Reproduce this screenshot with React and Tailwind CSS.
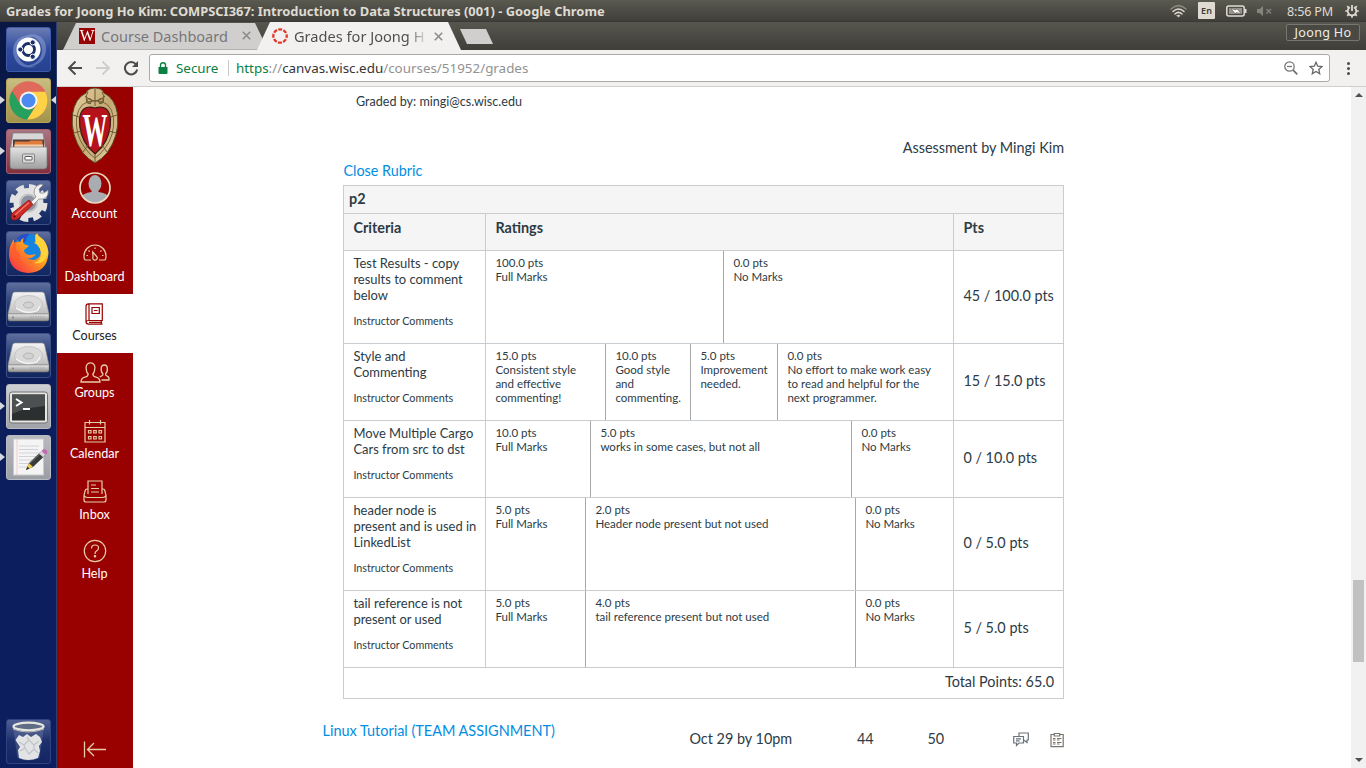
const UBUNTU = "font-['Noto_Sans','Open_Sans',sans-serif]";

/* ---------- launcher artwork ---------- */

function Tile({ className, children, left, right }) {
  return (
    <div className={`relative h-[45px] w-[45px] shrink-0 rounded-[3px] ${className}`}>
      <svg viewBox="0 0 45 45" className="block h-[45px] w-[45px]">{children}</svg>
      {left && <span className="absolute top-[17px] -left-[7px] border-y-[4px] border-l-[5px] border-y-transparent border-l-[#d5d8de]" />}
      {right && <span className="absolute top-[17px] -right-[6px] border-y-[4px] border-r-[5px] border-y-transparent border-r-[#d5d8de]" />}
    </div>
  );
}

const glass = "bg-linear-to-b from-[#5f6f9d] via-[#253a74] to-[#12265f] border border-[#3c4f86]";

function Drive() {
  return (
    <Tile className={glass}>
      <defs>
        <linearGradient id="drv" x1="0" y1="0" x2="0" y2="1">
          <stop offset="0" stopColor="#f4f4f4" />
          <stop offset="1" stopColor="#bdbdbd" />
        </linearGradient>
        <linearGradient id="drvf" x1="0" y1="0" x2="0" y2="1">
          <stop offset="0" stopColor="#e9e9e9" />
          <stop offset="1" stopColor="#8d8d8d" />
        </linearGradient>
      </defs>
      <path d="M8 9H35Q37 9 37.600 11L42 31H1L5.500 11Q6 9 8 9Z" fill="url(#drv)" stroke="#8f8f8f" strokeWidth=".6" />
      <ellipse cx="21.500" cy="21.500" rx="14" ry="9" fill="#dadada" stroke="#bcbcbc" strokeWidth=".8" />
      <path d="M9 25Q19 32 30 28L33 23" fill="none" stroke="#f7f7f7" strokeWidth="1.200" />
      <ellipse cx="21.500" cy="22" rx="5" ry="3" fill="#d2d2d2" stroke="#aaa" strokeWidth=".8" />
      <path d="M1 31H42V36Q42 38 40 38H3Q1 38 1 36Z" fill="url(#drvf)" stroke="#777" strokeWidth=".5" />
      <path d="M24 33v3M26.500 33v3M29 33v3M31.500 33v3M34 33v3M36.500 33v3" stroke="#aaa" strokeWidth=".9" />
      <circle cx="6" cy="34.500" r=".9" fill="#777" />
    </Tile>
  );
}

function Launcher() {
  return (
    <div className="flex h-full w-[57px] shrink-0 flex-col gap-[6px] border-r border-[#2c3d72] bg-linear-to-b from-[#081744] to-[#0d1e5e] to-60% pt-[5px] pb-1 pl-[6px]">
      <Tile className="border border-[#3f58a8] bg-linear-to-b from-[#6b7cb4] via-[#2f4a9c] to-[#24418f]">
        <path d="M6 22C7 9 20 4 33 9C22 7 12 13 11 23C10 34 20 40 30 38C16 43 6 35 6 22ZM39 22C38 35 26 41 15 37C27 39 35 32 35 22C35 13 28 8 20 7C31 4 40 11 39 22Z" fill="#93a8dc" opacity=".5" />
        <circle cx="21.500" cy="21.500" r="12" fill="#fff" />
        <circle cx="21.500" cy="21.500" r="6" fill="none" stroke="#1b2f6b" strokeWidth="2.800" />
        <g fill="#1b2f6b" stroke="#fff" strokeWidth="1">
          <circle cx="13.300" cy="21.500" r="2.600" />
          <circle cx="25.700" cy="14.400" r="2.600" />
          <circle cx="25.700" cy="28.700" r="2.600" />
        </g>
      </Tile>
      <Tile className="border border-[#b5a55c] bg-linear-to-b from-[#c9bd80] to-[#a3934a]" left right>
        <circle cx="21.500" cy="21.500" r="19" fill="#e0635a" />
        <path d="M21.500 12.500H38.2A19 19 0 0 1 21.500 40.500L20 40.400L29.500 26Z" fill="#fdd247" />
        <path d="M5 12L13.700 26L21.500 31L27.500 28.500L20 40.500A19 19 0 0 1 5 12Z" fill="#25a05d" />
        <path d="M5 12A19 19 0 0 1 38.200 12.500H21.500Q14 13 13 22Z" fill="#df6a5c" />
        <circle cx="21.500" cy="21.500" r="9" fill="#f7f7f2" />
        <circle cx="21.500" cy="21.500" r="7" fill="#4b8bf0" />
      </Tile>
      <Tile className="border border-[#a4606e] bg-linear-to-b from-[#a97682] to-[#822f3e]" left>
        <defs>
          <linearGradient id="cab" x1="0" y1="0" x2="0" y2="1">
            <stop offset="0" stopColor="#e4e4e4" />
            <stop offset="1" stopColor="#9f9f9f" />
          </linearGradient>
        </defs>
        <path d="M6 3H36L38.500 18H3.500Z" fill="#d7d7d7" stroke="#777" strokeWidth=".6" />
        <path d="M6 9.500H37V18H6Z" fill="#513b33" />
        <path d="M8 11.500H22L23.500 10.500H35.500V18H7Z" fill="#e07d3d" />
        <path d="M7.500 14.500H36V18H7.500Z" fill="#f4cfae" />
        <path d="M3 17H39Q40 17 40 18V36Q40 39 37 39H6Q3 39 3 36Z" fill="url(#cab)" stroke="#777" strokeWidth=".7" />
        <rect x="15.500" y="24" width="12" height="9" rx="1" fill="#d8d8d8" stroke="#858585" />
        <rect x="18" y="26.500" width="7" height="3.500" rx=".5" fill="#fff" stroke="#555" />
      </Tile>
      <Tile className={glass}>
        <circle cx="21.500" cy="22" r="15" fill="#e2e2e2" />
        <circle cx="21.500" cy="22" r="16.500" fill="none" stroke="#e2e2e2" strokeWidth="5" strokeDasharray="7.960 5" />
        <circle cx="21.500" cy="22" r="8.500" fill="#8d93a3" stroke="#c4c4c4" strokeWidth="2" />
        <path d="M19 26L29 16L27 12Q27 5 34 3L36 4L32 8L33 12L37 12L41 9Q42 16 36 18L32 18L22 28Z" fill="#f2f2f2" stroke="#8c8c8c" strokeWidth=".8" />
        <path d="M22 19L26 23.500L11 38Q7 40 4.500 38Q3 35 5.500 32Z" fill="#cc2a24" stroke="#8b100f" strokeWidth=".8" />
        <path d="M22 21.500L8 34" stroke="#ef7a70" strokeWidth="1.500" />
        <circle cx="7.500" cy="35.500" r="1.200" fill="#601010" />
      </Tile>
      <Tile className={glass}>
        <defs>
          <linearGradient id="fox" x1="1" y1="0" x2="0" y2="1">
            <stop offset="0" stopColor="#ffe94a" />
            <stop offset=".45" stopColor="#ff9a1e" />
            <stop offset="1" stopColor="#f5204f" />
          </linearGradient>
        </defs>
        <circle cx="22" cy="17" r="15" fill="#1583e0" />
        <path d="M10 6Q15 1 23 2Q19 4 19 9L14 12Z" fill="#2a4fc6" />
        <path d="M7 7L7 11Q10 9 13 10Q14 7 17 6Q15 9 17 12L22 14L17 18Q17 22 22 23Q26 23 29 22Q26 27 20 26Q28 31 33 24Q35 18 31 13L27 11Q30 10 28 3Q32 1 31 4Q40 9 41.500 20Q41 40 21.500 41Q3 40 2 23Q2 13 7 7Z" fill="url(#fox)" />
        <path d="M30 1Q26 8 31 14Q35 18 34 24Q32 30 27 31Q38 33 41 21Q40 9 33 5Q30 3 30 1Z" fill="#ffd43a" />
        <path d="M7 11Q3 18 5 24Q9 34 20 34Q12 30 12 23Q12 19 9 18Q8 14 10 10Z" fill="#ff5a2c" opacity=".75" />
      </Tile>
      <Drive />
      <Drive />
      <Tile className="border border-[#b9bbc2] bg-linear-to-b from-[#cfd0d4] to-[#a0a2a9]" left>
        <rect x="2.500" y="7" width="38" height="31" rx="2.500" fill="#e6e6e2" stroke="#6f6f6f" />
        <rect x="5" y="9.500" width="33" height="26" fill="#2c2f2f" />
        <path d="M5 9.500H38V21Q20 22 5 29Z" fill="#4d5050" />
        <path d="M9 14L14.500 17.500L9 21" fill="none" stroke="#fff" strokeWidth="2" />
        <path d="M16 24H23" stroke="#fff" strokeWidth="2" />
      </Tile>
      <Tile className="border border-[#b9bbc2] bg-linear-to-b from-[#b9bac0] to-[#9c9ea6]" left>
        <rect x="6.500" y="3" width="30" height="36" fill="#f4f4f4" stroke="#c9c9c9" />
        <path d="M12 10H32M12 13.500H31M12 17H32M12 20.500H29M12 24H26M12 27.500H22M12 31H20" stroke="#cfd3d8" strokeWidth="1.200" />
        <path d="M10 3V39" stroke="#ecb7b7" strokeWidth=".6" />
        <path d="M19 34L22 27L34 15.500L38 19.500L26 31Z" fill="#3a3a3a" />
        <path d="M23 27L34 17" stroke="#777" strokeWidth="1" />
        <path d="M19 34L22 27L26 31Z" fill="#e9c94e" />
        <path d="M19 34L20.500 30.800L22.300 32.500Z" fill="#222" />
        <path d="M32 17.500L35 14.500L39 18L36 21.300Z" fill="#d8d8d8" />
        <path d="M34.500 15L36.500 13Q39 12.500 40.500 15.500L40 17.500L38.500 19Z" fill="#c16bb0" />
      </Tile>
      <div className="flex-1" />
      <Tile className="border border-[#31437e] bg-linear-to-b from-[#515f93] via-[#1d2f6c] to-[#132664]">
        <path d="M6 7L10.500 38Q21.500 43 32.500 38L37 7Z" fill="#7b88ad" opacity=".35" />
        <path d="M8.500 20L12 15L16 17L20 14L24 17L29 14L33 17L35 22L32 26L33 31L31 38Q21 42 12 38L11 30L13 27Z" fill="#e1e3e4" />
        <path d="M12 22L17 25L22 20L27 25L32 21M13 31L18 28L22 34L27 29L31 33M17 25L18 28M27 25V29M20 17L22 20" stroke="#bfc3c7" strokeWidth="1.200" fill="none" />
        <ellipse cx="21.500" cy="6.500" rx="15" ry="3.800" fill="#606c86" stroke="#e6e6e0" strokeWidth="2.200" />
        <path d="M6 9Q21 15 37 9" fill="none" stroke="#b5b8b8" strokeWidth="1" />
      </Tile>
    </div>
  );
}

/* ---------- desktop panel and browser chrome ---------- */

function TopPanel() {
  return (
    <div className={`flex h-[22px] shrink-0 items-center border-b border-[#3a3934] bg-linear-to-b from-[#5b5a50] to-[#403f3a] pl-[6px] ${UBUNTU}`}>
      <div className="w-[1164px] text-[12.900px] leading-[20px] font-bold whitespace-pre text-[#dfdbd2]">
        Grades for Joong Ho Kim: COMPSCI367: Introduction to Data Structures (001) - Google Chrome
      </div>
      <svg className="mr-[11px] h-[16px] w-[17px]" viewBox="0 0 17 16" fill="none" stroke="#dfdbd2" strokeLinecap="round">
        <path d="M1 6Q8.500-.8 16 6" stroke="#8b897f" strokeWidth="1.500" />
        <path d="M3 8.500Q8.500 3.500 14 8.500M5 11Q8.500 7.800 12 11" strokeWidth="1.500" />
        <path d="M7 12.500L8.500 14.200L10 12.500Q8.500 11.500 7 12.500Z" fill="#dfdbd2" strokeWidth=".5" />
      </svg>
      <span className="mr-[11px] flex h-[17px] w-[17px] items-center justify-center rounded-[1px] bg-[#dfdbd2] text-[9px] font-semibold text-[#3c3b37]">En</span>
      <svg className="mr-[10px] h-[12px] w-[21px]" viewBox="0 0 21 12">
        <rect x=".8" y="1" width="17.400" height="10" rx="2" fill="none" stroke="#dfdbd2" strokeWidth="1.500" />
        <rect x="3" y="3" width="13" height="6" fill="#97948b" />
        <path d="M19 4h1.500v4h-1.500z" fill="#dfdbd2" />
        <path d="M5 3.500L10 5L10.500 3.500L15 8.500L10 7.500L9.500 9Z" fill="#fff" stroke="#4a4943" strokeWidth=".5" />
      </svg>
      <svg className="mr-[15px] h-[12px] w-[15px]" viewBox="0 0 15 12">
        <path d="M0 4H2.500L6 1V11L2.500 8H0Z" fill="#85837a" />
        <path d="M9.500 4L14 8.500M14 4L9.500 8.500" stroke="#85837a" strokeWidth="1.400" />
      </svg>
      <span className="w-[58px] pt-[2px] text-[12.600px] leading-[18px] tracking-[-0.200px] whitespace-pre text-[#dfdbd2]">8:56 PM</span>
      <svg className="h-[14px] w-[14px]" viewBox="0 0 14 14" fill="none" stroke="#dfdbd2">
        <path d="M5 3.300A4.300 4.300 0 1 0 9 3.300" strokeWidth="1.800" />
        <path d="M7 1V7" strokeWidth="1.800" />
        <path d="M.3 7H2.500M11.500 7H13.700M7 11.500V13.800M2.200 2.200L3.800 3.800M11.800 2.200L10.200 3.800M2.200 11.800L3.800 10.200M11.800 11.800L10.200 10.200" strokeWidth="1.700" />
      </svg>
    </div>
  );
}

function CloseX() {
  return (
    <svg className="h-[9px] w-[9px]" viewBox="0 0 9 9" stroke="#8c8b89" strokeWidth="1.600">
      <path d="M.8 .8L8.200 8.200M8.200 .8L.8 8.200" />
    </svg>
  );
}

function TabStrip() {
  return (
    <div className={`flex h-[28px] shrink-0 bg-linear-to-b from-[#57564e] to-[#3f3e39] pl-[6px] ${UBUNTU}`}>
      <div className="flex h-[28px] w-[205px] items-center border-b border-[#b3b1ae] bg-[#d0cfcd] pl-[16px] [clip-path:polygon(0_100%,13px_1px,192px_1px,100%_100%)]">
        <span className="flex h-[16px] w-[16px] items-center justify-center bg-[#980303] font-['Liberation_Serif',serif] text-[17px] leading-[16px] text-white">
          <span className="scale-x-[0.92]">W</span>
        </span>
        <span className="ml-[6px] w-[141px] text-[14.500px] leading-[20px] whitespace-nowrap text-[#77767a]">Course Dashboard</span>
        <CloseX />
      </div>
      <div className="relative -ml-[11px] flex h-[28px] w-[204px] items-center bg-[#f2f1f0] pl-[15px] [clip-path:polygon(0_100%,13px_0,191px_0,100%_100%)]">
        <svg className="h-[16px] w-[16px]" viewBox="0 0 16 16" fill="none" stroke="#e0392b">
          <circle cx="8" cy="8" r="6.700" strokeWidth="2.300" strokeDasharray="3.900 1.360" strokeDashoffset="1.950" />
        </svg>
        <span className="ml-[6px] w-[134px] bg-linear-to-r from-[#4d4c4a] from-85% to-[#4d4c4a00] bg-clip-text text-[14.600px] leading-[20px] whitespace-nowrap text-transparent">Grades for Joong H</span>
        <span className="ml-[6px] flex"><CloseX /></span>
      </div>
      <div className="mt-[7px] -ml-px h-[15px] w-[33px] bg-[#d0cfcd] [clip-path:polygon(0_0,26px_0,100%_100%,7px_100%)]" />
      <div className="flex-1" />
      <div className="mt-[2px] mr-[6px] flex h-[17px] w-[74px] items-center justify-center rounded-[2px] border border-[#77766f] bg-[#494842] pt-[2px] text-[12.600px] leading-none text-[#eeece6]">
        <span className="tracking-[0.300px]">Joong Ho</span>
      </div>
    </div>
  );
}

function Toolbar() {
  return (
    <div className={`flex h-[37px] shrink-0 items-center border-b border-[#d0cfce] bg-[#f2f1f0] pl-[10px] ${UBUNTU}`}>
      <svg className="h-[16px] w-[16px]" viewBox="0 0 16 16" fill="none" stroke="#4b4b4b" strokeWidth="2">
        <path d="M15 8H2M8.500 1.500L2 8L8.500 14.500" />
      </svg>
      <svg className="ml-[12px] h-[16px] w-[16px]" viewBox="0 0 16 16" fill="none" stroke="#cfcecd" strokeWidth="2">
        <path d="M1 8H14M7.500 1.500L14 8L7.500 14.500" />
      </svg>
      <svg className="ml-[12px] h-[16px] w-[16px]" viewBox="0 0 16 16" fill="none" stroke="#4b4b4b" strokeWidth="2">
        <path d="M13 4.300A6.200 6.200 0 1 0 14.200 9.500" />
        <path d="M15 1V7H9Z" fill="#4b4b4b" stroke="none" />
      </svg>
      <div className="ml-[10px] flex h-[28px] w-[1181px] items-center rounded-[3px] border border-[#aaa9a8] bg-white pr-[6px] pl-[8px] text-[13.400px]">
        <svg className="h-[12px] w-[10px]" viewBox="0 0 10 12">
          <path d="M1 5H9Q9.500 5 9.500 5.500V11Q9.500 12 8.500 12H1.500Q.5 12 .5 11V5.500Q.5 5 1 5Z" fill="#0b8043" />
          <path d="M2.500 6V3A2.500 2.300 0 0 1 7.500 3V6" fill="none" stroke="#0b8043" strokeWidth="1.400" />
        </svg>
        <span className="ml-[8px] w-[52px] text-[#0b8043]">Secure</span>
        <span className="mr-[7px] h-[16px] w-px bg-[#c8c8c8]" />
        <span className="flex-1 whitespace-nowrap text-[#929292]">
          <span className="text-[#0b8043]">https</span>://<span className="text-[#333]">canvas.wisc.edu</span>/courses/51952/grades
        </span>
        <svg className="h-[14px] w-[14px]" viewBox="0 0 14 14" fill="none" stroke="#777" strokeWidth="1.300">
          <circle cx="5.500" cy="5.500" r="4.700" />
          <path d="M3 5.500H8" />
          <path d="M9 9L13.300 13.300" strokeWidth="1.800" />
        </svg>
        <svg className="ml-[11px] h-[14px] w-[14px]" viewBox="0 0 14 14" fill="none" stroke="#666" strokeWidth="1.300">
          <path d="M7 1.300L8.700 5.200L13 5.600L9.800 8.400L10.700 12.700L7 10.400L3.300 12.700L4.200 8.400L1 5.600L5.300 5.200Z" />
        </svg>
      </div>
      <div className="ml-[17px] flex flex-col gap-[2px]">
        <span className="h-[3px] w-[3px] rounded-full bg-[#4b4b4b]" />
        <span className="h-[3px] w-[3px] rounded-full bg-[#4b4b4b]" />
        <span className="h-[3px] w-[3px] rounded-full bg-[#4b4b4b]" />
      </div>
    </div>
  );
}

/* ---------- course navigation ---------- */

function Crest() {
  return (
    <svg className="mx-auto block h-[78px] w-[48px] shrink-0" viewBox="0 0 48 78">
      <defs>
        <linearGradient id="gold" x1="0" y1="0" x2="1" y2="1">
          <stop offset="0" stopColor="#e6d3a4" />
          <stop offset=".5" stopColor="#c3a871" />
          <stop offset="1" stopColor="#e3cfa2" />
        </linearGradient>
      </defs>
      <path d="M24 1Q31 1 33 6Q44 11 46.500 27Q49 48 36 66Q31 72 24 76Q17 72 12 66Q-1 48 1.500 27Q4 11 15 6Q17 1 24 1Z" fill="url(#gold)" stroke="#5a4526" strokeWidth="1" />
      <path d="M24 14Q40 13 42.500 31Q44 48 34 61Q29 68 24 71Q19 68 14 61Q4 48 5.500 31Q8 13 24 14Z" fill="none" stroke="#7c6740" strokeWidth="1" />
      <path d="M24 21Q38 17 39.500 32Q40 48 31 60L24 67L17 60Q8 48 8.500 32Q10 17 24 21Z" fill="#b5121b" stroke="#3a1a12" strokeWidth="1.200" />
      <path d="M24 2V19M17 5Q12 13 20 17M31 5Q36 13 28 17M14 9Q24 19 34 9M2 28L8 30M46 28L40 30M3 46L10 44M45 46L38 44M12 65L17 58M36 65L31 58M24 67V76" fill="none" stroke="#6d5730" strokeWidth="1" />
      <circle cx="18" cy="14" r="2.500" fill="none" stroke="#6d5730" />
      <circle cx="30" cy="14" r="2.500" fill="none" stroke="#6d5730" />
      <text x="11.500" y="59" fontFamily="Liberation Serif" fontWeight="700" fontSize="46" fill="#fff" textLength="25" lengthAdjust="spacingAndGlyphs">W</text>
    </svg>
  );
}

const navIcons = {
  Account: (
    <svg className="h-[32px] w-[32px]" viewBox="0 0 32 32">
      <defs><clipPath id="av"><circle cx="16" cy="16" r="15" /></clipPath></defs>
      <circle cx="16" cy="16" r="15" fill="#990000" />
      <g clipPath="url(#av)" fill="#a9acb0">
        <ellipse cx="16" cy="11.500" rx="6.500" ry="8.500" />
        <path d="M12.500 17H19.500V20Q28 21 31 26V32H1V26Q4 21 12.500 20Z" />
      </g>
      <circle cx="16" cy="16" r="15" fill="none" stroke="#eddcc0" strokeWidth="1.700" />
    </svg>
  ),
  Dashboard: (
    <svg className="mb-[6px] h-[17px] w-[24px]" viewBox="0 0 24 17" fill="none" stroke="currentColor" strokeWidth="1.200">
      <path d="M8 16H2.500Q1 16 1 12A11 11 0 0 1 23 12Q23 16 21.500 16H16" />
      <path d="M9.700 8L13.700 12.500A2.200 2.200 0 1 1 10 13Z" />
      <path d="M3.500 11.500H5M19 11.500H20.500M5.500 6.500L6.700 7.600M18.500 6.500L17.300 7.600M12 3.500V5" />
    </svg>
  ),
  Courses: (
    <svg className="mb-px h-[22px] w-[19px]" viewBox="0 0 19 22" fill="none" stroke="currentColor" strokeWidth="1.200">
      <path d="M3.500 17.500H17.300V.8H3.500Q1 .8 1 3.500V18.500Q1 21.200 3.500 21.200H17.500M16.300 17.500V21.200M1 19Q1 17.500 3.500 17.500M4 .8V17.500M4 19.400H16.300" />
      <path d="M7 4.500H14.300V10.500H7ZM9 7.500H12.500" />
    </svg>
  ),
  Groups: (
    <svg className="h-[21px] w-[30px]" viewBox="0 0 30 21" fill="none" stroke="currentColor" strokeWidth="1.300">
      <path d="M7 10.500Q5 4 7.500 2Q10.500-.3 13.500 2Q16 4 14 10.500L12.800 12Q13 14.500 16 15.200Q20 16.200 20 20H1Q1 16.200 5 15.200Q8 14.500 8.200 12Z" />
      <path d="M21.500 18H29Q29.300 14.800 27.200 14.200Q25.200 13.500 25.500 12Q27.800 10 27.300 6Q27 3 24.300 3Q21.500 3 21.200 6Q20.800 10 23 12Q23.300 13.500 21.300 14.200Q20.300 14.500 19.800 15" />
    </svg>
  ),
  Calendar: (
    <svg className="mb-px h-[24px] w-[22px]" viewBox="0 0 22 24" fill="none" stroke="currentColor" strokeWidth="1.200">
      <path d="M1 3.500H21V23H1ZM1 8.500H21M5.500 1V5.500M16.500 1V5.500" />
      <path d="M4.500 11.500H7V14H4.500ZM9.700 11.500H12.200V14H9.700ZM15 11.500H17.500V14H15ZM4.500 17.500H7V20H4.500ZM9.700 17.500H12.200V20H9.700ZM15 17.500H17.500V20H15Z" />
    </svg>
  ),
  Inbox: (
    <svg className="mb-[2px] h-[23px] w-[24px]" viewBox="0 0 24 23" fill="none" stroke="currentColor" strokeWidth="1.200">
      <path d="M5 14V1H19V14M8 5H13M8 8.500H16M8 12H16" />
      <path d="M5 9H4Q2.500 9 2 11L1 15.500V20Q1 22 3 22H21Q23 22 23 20V15.500L22 11Q21.500 9 20 9H19M1 15.500Q2 17.500 4.500 17.500H19.500Q22 17.500 23 15.500" />
    </svg>
  ),
  Help: (
    <svg className="mb-px h-[24px] w-[24px]" viewBox="0 0 24 24" fill="none" stroke="currentColor" strokeWidth="1.200">
      <circle cx="12" cy="12" r="10.700" />
      <path d="M8.500 9.500Q8.500 6 12 6Q15.500 6 15.500 9Q15.500 11 13.500 12Q12 12.800 12 15" />
      <circle cx="12" cy="17.300" r=".7" fill="currentColor" />
    </svg>
  ),
};

const navItems = [
  ["Account", "h-[66px]"],
  ["Dashboard", "h-[63px]"],
  ["Courses", "h-[59px]"],
  ["Groups", "h-[57px]"],
  ["Calendar", "h-[61px]"],
  ["Inbox", "h-[61px]"],
  ["Help", "h-[59px]"],
];

function CourseNav() {
  return (
    <div className="flex w-[76px] shrink-0 flex-col bg-[#990000]">
      <Crest />
      {navItems.map(([name, height]) => {
        const active = name === "Courses";
        return (
          <div key={name} className={`flex shrink-0 flex-col items-center justify-end pr-px pb-[8px] ${height} ${active ? "bg-white text-[#990000]" : "text-[#e6cda9]"}`}>
            {navIcons[name]}
            <span className={`text-[12.600px] leading-[18px] ${name === "Account" || name === "Groups" ? "mt-px" : "mt-px"} ${active ? "text-[#1c1c1c]" : "text-white"}`}>{name}</span>
          </div>
        );
      })}
      <div className="flex flex-1 items-end justify-center pr-px pb-[10px] text-[#e6cda9]">
        <svg className="h-[17px] w-[24px]" viewBox="0 0 24 17" fill="none" stroke="currentColor" strokeWidth="1.300">
          <path d="M1.500 .5V16.500M23 8.500H4.500M11 2L4.500 8.500L11 15" />
        </svg>
      </div>
    </div>
  );
}

/* ---------- rubric ---------- */

const rubric = [
  {
    height: "h-[93px]",
    criterion: ["Test Results - copy", "results to comment", "below"],
    pts: "45 / 100.0 pts",
    ratings: [
      ["w-[238px]", "100.0 pts", "Full Marks"],
      ["flex-1", "0.0 pts", "No Marks"],
    ],
  },
  {
    height: "h-[77px]",
    criterion: ["Style and", "Commenting"],
    pts: "15 / 15.0 pts",
    ratings: [
      ["w-[120px]", "15.0 pts", "Consistent style", "and effective", "commenting!"],
      ["w-[85px]", "10.0 pts", "Good style", "and", "commenting."],
      ["w-[87px]", "5.0 pts", "Improvement", "needed."],
      ["flex-1", "0.0 pts", "No effort to make work easy", "to read and helpful for the", "next programmer."],
    ],
  },
  {
    height: "h-[77px]",
    criterion: ["Move Multiple Cargo", "Cars from src to dst"],
    pts: "0 / 10.0 pts",
    ratings: [
      ["w-[105px]", "10.0 pts", "Full Marks"],
      ["w-[261px]", "5.0 pts", "works in some cases, but not all"],
      ["flex-1", "0.0 pts", "No Marks"],
    ],
  },
  {
    height: "h-[93px]",
    criterion: ["header node is", "present and is used in", "LinkedList"],
    pts: "0 / 5.0 pts",
    ratings: [
      ["w-[100px]", "5.0 pts", "Full Marks"],
      ["w-[270px]", "2.0 pts", "Header node present but not used"],
      ["flex-1", "0.0 pts", "No Marks"],
    ],
  },
  {
    height: "h-[77px]",
    criterion: ["tail reference is not", "present or used"],
    pts: "5 / 5.0 pts",
    ratings: [
      ["w-[100px]", "5.0 pts", "Full Marks"],
      ["w-[270px]", "4.0 pts", "tail reference present but not used"],
      ["flex-1", "0.0 pts", "No Marks"],
    ],
  },
];

function Rubric() {
  return (
    <div className="flex w-[721px] flex-col border-t border-l border-[#c7cdd1]">
      <div className="h-[28px] border-r border-b border-[#c7cdd1] bg-[#f5f5f5] pt-[2px] pl-[5px] font-bold">p2</div>
      <div className="flex h-[37px] border-b border-[#c7cdd1] bg-[#f5f5f5] font-bold">
        <div className="w-[142px] border-r border-[#c7cdd1] pt-[3px] pl-[9.400px]">Criteria</div>
        <div className="w-[468px] border-r border-[#c7cdd1] pt-[3px] pl-[9.400px]">Ratings</div>
        <div className="flex-1 border-r border-[#c7cdd1] pt-[3px] pl-[9.400px]">Pts</div>
      </div>
      {rubric.map((row) => (
        <div key={row.criterion[0]} className={`flex border-b border-[#c7cdd1] ${row.height}`}>
          <div className="w-[142px] border-r border-[#c7cdd1] pt-[4px] pl-[9.400px] whitespace-nowrap">
            {row.criterion.map((line) => (
              <div key={line} className="text-[12.960px] leading-[16px]">{line}</div>
            ))}
            <div className="mt-[11px] text-[10.750px] leading-[14px]">Instructor Comments</div>
          </div>
          <div className="flex w-[468px] border-r border-[#c7cdd1] text-[11.530px] leading-[14px] whitespace-nowrap">
            {row.ratings.map(([width, ...lines], i) => (
              <div key={i} className={`pt-[5px] pl-[9.400px] ${width} ${i < row.ratings.length - 1 ? "border-r border-[#a5a7a9]" : ""}`}>
                {lines.map((line) => <div key={line}>{line}</div>)}
              </div>
            ))}
          </div>
          <div className="flex flex-1 items-center border-r border-[#c7cdd1] pb-[3px] pl-[9.400px] whitespace-nowrap">{row.pts}</div>
        </div>
      ))}
      <div className="flex h-[31px] items-center justify-end border-r border-b border-[#c7cdd1] pr-[9px] pb-[3px]">Total Points: 65.0</div>
    </div>
  );
}

function Page() {
  return (
    <div className="flex flex-1 flex-col pt-[5px] pl-[210px] text-[14.400px] leading-[21px] text-[#2d3b45]">
      <div className="pl-[13px] text-[12.570px] leading-[20px]">Graded by: mingi@cs.wisc.edu</div>
      <div className="mt-[25px] w-[721px] text-right">Assessment by Mingi Kim</div>
      <div className="mt-[2px] pl-[0.400px] text-[#008ee2]">Close Rubric</div>
      <div className="mt-[4px]"><Rubric /></div>
      <div className="-ml-[21px] flex pt-[21px]">
        <div className="w-[367px] pl-[0.500px] text-[14.460px] text-[#008ee2]">Linux Tutorial (TEAM ASSIGNMENT)</div>
        <div className="mt-[8px] w-[168px] pl-[0.400px]">Oct 29 by 10pm</div>
        <div className="mt-[8px] w-[70px]">44</div>
        <div className="mt-[8px] w-[86px] pl-[0.500px]">50</div>
        <svg className="mt-[12px] h-[15px] w-[16px]" viewBox="0 0 16 15" fill="none" stroke="#6b737a" strokeWidth="1.200">
          <path d="M6 4V1H15.300V8H14V10.500L11 8.300" />
          <path d="M.7 4.500H10.500V11H6L3.500 13.500V11H.7ZM3 6.800H8M3 8.800H6.500" />
        </svg>
        <svg className="mt-[12px] ml-[21px] h-[16px] w-[14px]" viewBox="0 0 14 16" fill="none" stroke="#7a746c" strokeWidth="1.200">
          <path d="M4 2.500H1V14.700H13.200V2.500H10M4.300 1.500H9.700V4H4.300Z" />
          <path d="M3 6.500H5.500M3 8H5.500M3 10.500H5.500M3 12H5.500M7 6.500H11.500M7 8H9.500M7 10.500H11.500M7 12H9.500" />
        </svg>
      </div>
    </div>
  );
}

function Scrollbar() {
  return (
    <div className="flex w-[15px] shrink-0 flex-col items-center bg-[#f1f1f1]">
      <span className="mt-[6px] border-x-[4px] border-b-[4px] border-x-transparent border-b-[#505050]" />
      <span className="mt-[483px] h-[82px] w-[11px] bg-[#c1c1c1]" />
      <span className="mt-auto mb-[6px] border-x-[4px] border-t-[4px] border-x-transparent border-t-[#505050]" />
    </div>
  );
}

export default function App() {
  return (
    <div className="flex h-[768px] w-[1366px] flex-col overflow-hidden bg-white font-['Lato',sans-serif]">
      <TopPanel />
      <div className="flex min-h-0 flex-1">
        <Launcher />
        <div className="flex min-w-0 flex-1 flex-col">
          <TabStrip />
          <Toolbar />
          <div className="flex min-h-0 flex-1">
            <CourseNav />
            <Page />
            <Scrollbar />
          </div>
        </div>
      </div>
    </div>
  );
}
